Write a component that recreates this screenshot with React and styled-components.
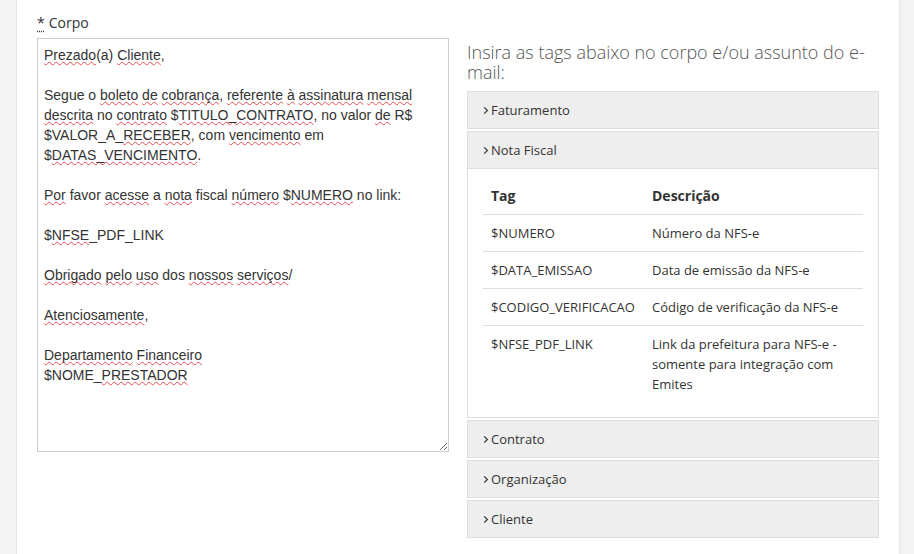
import React, { useState } from 'react';
import styled, { createGlobalStyle } from 'styled-components';

const GlobalStyle = createGlobalStyle`
	html, body {
		margin: 0;
		padding: 0;
		background: #f3f3f3;
	}

	body {
		font-family: 'Open Sans', 'Liberation Sans', sans-serif;
		color: #333;
	}
`;

const Sheet = styled.div`
	box-sizing: border-box;
	min-height: 100vh;
	margin: 0 15px 0 17px;
	padding: 13px 20px 20px;
	background: #fff;
	box-shadow: 0 0 2px rgba(0, 0, 0, 0.18);

	display: grid;
	grid-template-columns: 412px 412px;
	column-gap: 18px;
	align-items: start;
`;

const Field = styled.div`
	display: flex;
	flex-direction: column;
`;

const Label = styled.label`
	font-size: 14px;
	line-height: 20px;
	margin-bottom: 5px;
	color: #333;

	abbr {
		text-decoration: underline dotted;
		text-underline-offset: 3px;
		cursor: help;
		margin-right: 4px;
	}
`;

// a div instead of a textarea, so the spell-check marks can be drawn
const Editor = styled.div`
	box-sizing: border-box;
	height: 414px;
	padding: 6px;
	border: 1px solid #ccc;
	overflow: auto;
	resize: vertical;
	outline: none;

	font-family: 'Liberation Sans', Arial, sans-serif;
	font-size: 14px;
	line-height: 20px;
	color: #333;
`;

const Typo = styled.span`
	text-decoration: underline wavy rgba(230, 50, 55, 0.85);
	text-decoration-thickness: 1px;
	text-underline-offset: 1px;
	text-decoration-skip-ink: none;
`;

const Side = styled.div`
	padding-top: 29px;
`;

const Intro = styled.h4`
	margin: 0 0 9px;
	font-size: 18px;
	font-weight: 300;
	line-height: 20px;
	color: #555;
`;

const Panel = styled.div`
	border: 1px solid #ddd;
	margin-bottom: 2px;
	background: #fff;
`;

const PanelHeader = styled.button`
	display: flex;
	align-items: center;
	gap: 2px;
	width: 100%;
	height: 36px;
	padding: 0 15px;
	border: none;
	background: #eee;
	font-family: 'Open Sans', sans-serif;
	font-size: 13px;
	color: #333;
	text-align: left;
	cursor: pointer;

	svg {
		flex: none;
	}
`;

const PanelBody = styled.div`
	border-top: 1px solid #ddd;
	padding: 9px 15px 15px;
`;

const TagTable = styled.table`
	width: 100%;
	border-collapse: collapse;
	font-size: 13px;
	line-height: 20px;

	th, td {
		padding: 8px;
		text-align: left;
		vertical-align: top;
		border-bottom: 1px solid #ddd;
	}

	th {
		font-weight: 700;
		font-size: 14px;
	}

	tr:last-child td {
		border-bottom: none;
	}

	th:first-child, td:first-child {
		width: 145px;
	}
`;

const Chevron = () => (
	<svg width='6' height='9' viewBox='0 0 6 9'>
		<polyline points='1.2,1.3 4.4,4.5 1.2,7.7' fill='none' stroke='#333' strokeWidth='1.2' />
	</svg>
);

const notaFiscalTags = [
	{ tag: '$NUMERO', desc: 'Número da NFS-e' },
	{ tag: '$DATA_EMISSAO', desc: 'Data de emissão da NFS-e' },
	{ tag: '$CODIGO_VERIFICACAO', desc: 'Código de verificação da NFS-e' },
	{ tag: '$NFSE_PDF_LINK', desc: 'Link da prefeitura para NFS-e - somente para integração com Emites' },
];

const sections = ['Faturamento', 'Nota Fiscal', 'Contrato', 'Organização', 'Cliente'];

const App = () => {

	const [openSection, setOpenSection] = useState('Nota Fiscal');

	const toggle = (name) => {
		setOpenSection(openSection === name ? null : name);
	};

	return (
		<>
			<GlobalStyle />
			<Sheet>
				<Field>
					<Label><abbr title='obrigatório'>*</abbr>Corpo</Label>
					<Editor contentEditable suppressContentEditableWarning spellCheck={false}>
						<Typo>Prezado</Typo>(a) <Typo>Cliente</Typo>,<br />
						<br />
						Segue o <Typo>boleto</Typo> <Typo>de</Typo> <Typo>cobrança</Typo>, <Typo>referente</Typo> <Typo>à</Typo> <Typo>assinatura</Typo> <Typo>mensal</Typo> <Typo>descrita</Typo> no <Typo>contrato</Typo> $<Typo>TITULO_CONTRATO</Typo>, no valor <Typo>de</Typo> R$ $VALOR_A_<Typo>RECEBER</Typo>, com <Typo>vencimento</Typo> em $<Typo>DATAS_VENCIMENTO</Typo>.<br />
						<br />
						<Typo>Por</Typo> favor <Typo>acesse</Typo> a <Typo>nota</Typo> fiscal <Typo>número</Typo> $<Typo>NUMERO</Typo> no link:<br />
						<br />
						$<Typo>NFSE</Typo>_PDF_LINK<br />
						<br />
						<Typo>Obrigado</Typo> <Typo>pelo</Typo> <Typo>uso</Typo> dos <Typo>nossos</Typo> <Typo>serviços</Typo>/<br />
						<br />
						<Typo>Atenciosamente</Typo>,<br />
						<br />
						<Typo>Departamento</Typo> <Typo>Financeiro</Typo><br />
						$NOME_<Typo>PRESTADOR</Typo>
					</Editor>
				</Field>

				<Side>
					<Intro>Insira as tags abaixo no corpo e/ou assunto do e-mail:</Intro>
					{sections.map(name => (
						<Panel key={name}>
							<PanelHeader onClick={() => toggle(name)}>
								<Chevron />
								{name}
							</PanelHeader>
							{openSection === name && name === 'Nota Fiscal' && (
								<PanelBody>
									<TagTable>
										<thead>
											<tr><th>Tag</th><th>Descrição</th></tr>
										</thead>
										<tbody>
											{notaFiscalTags.map(row => (
												<tr key={row.tag}><td>{row.tag}</td><td>{row.desc}</td></tr>
											))}
										</tbody>
									</TagTable>
								</PanelBody>
							)}
						</Panel>
					))}
				</Side>
			</Sheet>
		</>
	);
};

export default App;
